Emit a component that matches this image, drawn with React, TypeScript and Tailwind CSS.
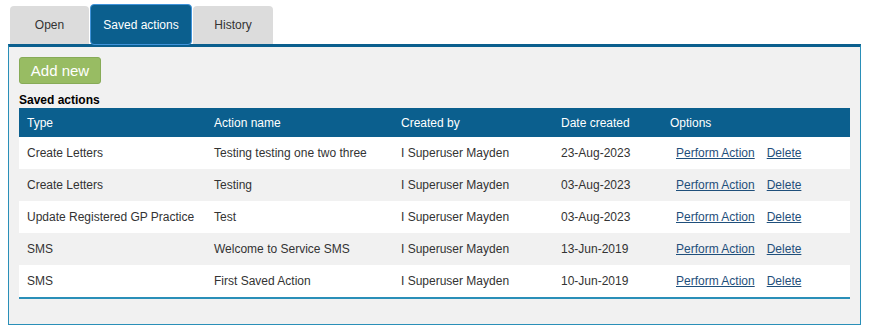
import React from 'react';

const rows = [
  { type: 'Create Letters', name: 'Testing testing one two three', by: 'I Superuser Mayden', date: '23-Aug-2023' },
  { type: 'Create Letters', name: 'Testing', by: 'I Superuser Mayden', date: '03-Aug-2023' },
  { type: 'Update Registered GP Practice', name: 'Test', by: 'I Superuser Mayden', date: '03-Aug-2023' },
  { type: 'SMS', name: 'Welcome to Service SMS', by: 'I Superuser Mayden', date: '13-Jun-2019' },
  { type: 'SMS', name: 'First Saved Action', by: 'I Superuser Mayden', date: '10-Jun-2019' },
];

const cols = 'grid grid-cols-[187px_187px_160px_109px_1fr] pl-2 items-center';

export default function App() {
  return (
    <div className="w-[869px] h-[334px] bg-white px-2 pt-[4px] text-[12px] text-[#333] font-['Liberation_Sans',Arial,sans-serif]">
      {/* Tabs */}
      <div className="flex items-end pl-[2px] gap-px h-[40px]">
        <div className="w-[79px] h-[38px] bg-[#dcdcdc] rounded-t-[4px] flex items-center justify-center">Open</div>
        <div className="relative z-10 w-[102px] h-[41px] -mb-px bg-[#0b5f8e] border border-[#3f93db] rounded-[4px] text-white flex items-center justify-center">
          Saved actions
        </div>
        <div className="w-[80px] h-[38px] bg-[#dcdcdc] rounded-t-[4px] flex items-center justify-center">History</div>
      </div>

      {/* Panel */}
      <div className="h-[281px] bg-[#f1f1f1] border border-[#2a8fb8] border-t-[3px] border-t-[#0b5f8e] px-[10px] pt-[10px]">
        <button className="w-[82px] h-[27px] bg-[#98bc63] border border-[#87ab57] rounded-[3px] text-white text-[15px] leading-none mb-[8px]">
          Add new
        </button>
        <div className="font-bold leading-[16px] text-black">Saved actions</div>

        <div className="border-b-2 border-[#2a8fb8]">
          <div className={`${cols} h-[29px] bg-[#0b5f8e] text-white`}>
            <div>Type</div>
            <div>Action name</div>
            <div>Created by</div>
            <div>Date created</div>
            <div>Options</div>
          </div>
          {rows.map((r, i) => (
            <div key={i} className={`${cols} h-[32px] ${i % 2 === 0 ? 'bg-white' : 'bg-[#f1f1f1]'}`}>
              <div>{r.type}</div>
              <div>{r.name}</div>
              <div>{r.by}</div>
              <div>{r.date}</div>
              <div className="flex gap-3 pl-[6px]">
                <a href="#" className="text-[#1f4f7b] underline">Perform Action</a>
                <a href="#" className="text-[#1f4f7b] underline">Delete</a>
              </div>
            </div>
          ))}
        </div>
      </div>
    </div>
  );
}
